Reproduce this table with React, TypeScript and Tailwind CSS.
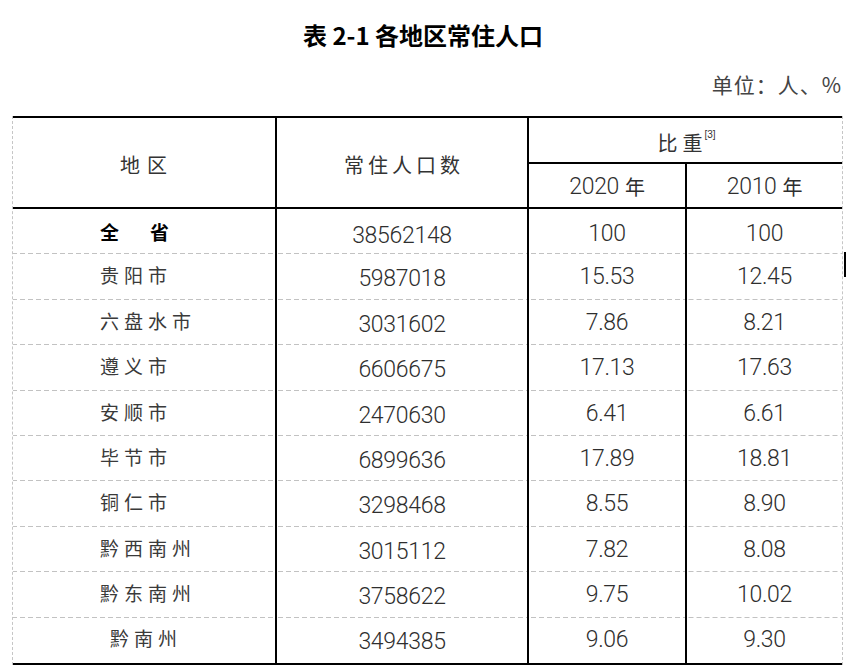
import React from 'react';

type Row = { name: string; pop: string; y2020: string; y2010: string; bold?: boolean; indent?: boolean };

const rows: Row[] = [
  { name: '全省', pop: '38562148', y2020: '100', y2010: '100', bold: true },
  { name: '贵阳市', pop: '5987018', y2020: '15.53', y2010: '12.45' },
  { name: '六盘水市', pop: '3031602', y2020: '7.86', y2010: '8.21' },
  { name: '遵义市', pop: '6606675', y2020: '17.13', y2010: '17.63' },
  { name: '安顺市', pop: '2470630', y2020: '6.41', y2010: '6.61' },
  { name: '毕节市', pop: '6899636', y2020: '17.89', y2010: '18.81' },
  { name: '铜仁市', pop: '3298468', y2020: '8.55', y2010: '8.90' },
  { name: '黔西南州', pop: '3015112', y2020: '7.82', y2010: '8.08' },
  { name: '黔东南州', pop: '3758622', y2020: '9.75', y2010: '10.02' },
  { name: '黔南州', pop: '3494385', y2020: '9.06', y2010: '9.30', indent: true },
];

const dashed =
  'bg-[linear-gradient(to_right,#c2c2c2_5px,transparent_5px)] bg-[length:8px_1px] bg-bottom bg-repeat-x';

const num = "font-['Roboto','Liberation_Sans',sans-serif] font-light text-[23px] tracking-[-0.3px] text-[#2e2e2e]";

const App = () => {
  return (
    <div className="w-[862px] h-[668px] bg-white overflow-hidden font-['Liberation_Sans','Noto_Sans_CJK_SC',sans-serif] text-[#333]">
      <div className="mt-[22px] h-[26px] w-[830px] ml-[12px] flex justify-center pr-[8px]">
        <h1 className="font-['Noto_Sans_CJK_SC',sans-serif] font-bold text-[24px] leading-[26px] text-black">
          表 2-1 各地区常住人口
        </h1>
      </div>
      <div className="mt-[23px] h-[26px] flex justify-end pr-[20px]">
        <span className="font-['Noto_Sans_CJK_SC',sans-serif] text-[21px] leading-[26px] tracking-[1px] text-[#444]">
          单位：人、%
        </span>
      </div>

      <div className="relative mt-[19px] ml-[12px] w-[831px] border-x border-dashed border-[#c6c6c6]">
        <div className="border-y-2 border-black">
          {/* header */}
          <div className="grid grid-cols-[264px_252px_158px_155px] grid-rows-[46px_45px]">
            <div className="row-span-2 border-r-2 border-b-2 border-black flex items-center justify-center pt-[4px] pl-[6px] font-['Noto_Sans_CJK_SC',sans-serif] text-[20px] tracking-[7px] text-[#333]">
              地区
            </div>
            <div className="row-span-2 border-r-2 border-b-2 border-black flex items-center justify-center pt-[4px] pl-[4px] font-['Noto_Sans_CJK_SC',sans-serif] text-[20px] tracking-[4px] text-[#333]">
              常住人口数
            </div>
            <div className="col-span-2 border-b-2 border-black flex items-center justify-center pt-[5px] pl-[2px] font-['Noto_Sans_CJK_SC',sans-serif] text-[20px] text-[#333]">
              <span className="tracking-[5px]">比</span>
              <span>重</span>
              <span className="self-start mt-[7px] ml-[2px] text-[10px] font-['Liberation_Sans',sans-serif] leading-none">[3]</span>
            </div>
            <div className={`border-r-2 border-b-2 border-black flex items-center justify-center pt-[3px] ${num}`}>
              2020<span className="ml-[6px] text-[20px] font-['Noto_Sans_CJK_SC',sans-serif] font-normal">年</span>
            </div>
            <div className={`border-b-2 border-black flex items-center justify-center pt-[3px] ${num}`}>
              2010<span className="ml-[6px] text-[20px] font-['Noto_Sans_CJK_SC',sans-serif] font-normal">年</span>
            </div>
          </div>

          {/* body */}
          {rows.map((r, i) => {
            const line = i < rows.length - 1 ? dashed : '';
            const shift = i === 0 ? 'mt-[4px]' : '';
            return (
              <div key={r.name} className="grid grid-cols-[264px_252px_158px_155px] h-[45.4px]">
                <div
                  className={`border-r-2 border-black flex items-center pb-[3px] font-['Noto_Sans_CJK_SC',sans-serif] text-[19px] ${line} ${
                    r.indent ? 'pl-[97px]' : 'pl-[87px]'
                  } ${r.bold ? 'font-bold text-black' : 'tracking-[5px] text-[#3a3a3a]'}`}
                >
                  {r.bold ? (
                    <span className={`flex gap-[31px] ${shift}`}>
                      <span>全</span>
                      <span>省</span>
                    </span>
                  ) : (
                    r.name
                  )}
                </div>
                <div className={`border-r-2 border-black flex items-center justify-center pt-[5px] ${num} ${line}`}>
                  <span className={shift}>{r.pop}</span>
                </div>
                <div className={`border-r-2 border-black flex items-center justify-center pt-[1px] ${num} ${line}`}>
                  <span className={shift}>{r.y2020}</span>
                </div>
                <div className={`flex items-center justify-center pt-[1px] ${num} ${line}`}>
                  <span className={shift}>{r.y2010}</span>
                </div>
              </div>
            );
          })}
        </div>

        {/* stray mark at the right edge */}
        <div className="absolute left-[831px] top-[136px] w-[2px] h-[25px] bg-black" />
      </div>
    </div>
  );
};

export default App;
